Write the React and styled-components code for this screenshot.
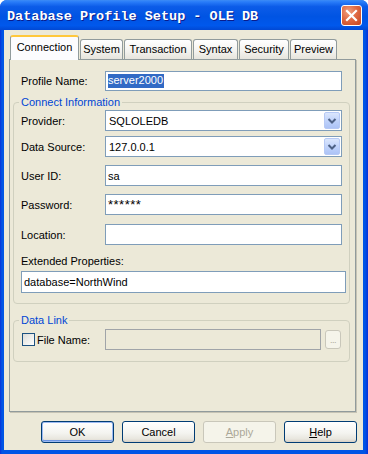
import React from "react";
import styled, {createGlobalStyle} from "styled-components";

const GlobalStyle = createGlobalStyle`
  html, body {
    margin: 0;
    padding: 0;
    width: 368px;
    height: 454px;
    overflow: hidden;
    background: #ffffff;
  }
  * { box-sizing: border-box; }
`;

const Window = styled.div`
  width: 368px;
  height: 454px;
  display: flex;
  flex-direction: column;
  background: linear-gradient(to right, #0831d9 0px, #0055e5 2px, #0055e5 365px, #0831d9 368px);
  border-radius: 7px 7px 0 0;
  font-family: "Liberation Sans", Arial, sans-serif;
  font-size: 11px;
  color: #000;
`;

const TitleBar = styled.div`
  height: 30px;
  flex-shrink: 0;
  display: flex;
  align-items: center;
  justify-content: space-between;
  padding: 0 6px 0 7px;
  border-radius: 7px 7px 0 0;
  background: linear-gradient(to bottom, #3d8cf5 0%, #2a7df9 6%, #0c5ce8 22%, #0054e3 55%, #0058ec 85%, #0148d4 100%);
`;

const Title = styled.span`
  font-family: "Liberation Mono", "Courier New", monospace;
  font-weight: bold;
  font-size: 13.5px;
  color: #ffffff;
  text-shadow: 1px 1px 0 #0a1c8c;
  margin-top: 2px;
`;

const CloseButton = styled.div`
  width: 21px;
  height: 21px;
  border: 1px solid #ffffff;
  border-radius: 3px;
  background: radial-gradient(circle at 35% 30%, #f0a080 0%, #e06a44 45%, #c4441f 100%);
  display: flex;
  align-items: center;
  justify-content: center;
  margin-top: 1px;
`;

const Client = styled.div`
  flex: 1;
  margin: 0 5px 4px 4px;
  background: #ece9d8;
  padding: 5px 0 0 5px;
  display: flex;
  flex-direction: column;
`;

const TabRow = styled.div`
  display: flex;
  align-items: flex-end;
  gap: 1px;
  height: 24px;
  margin-left: 1px;
`;

const Tab = styled.div`
  position: relative;
  width: ${p => p.$w}px;
  height: ${p => (p.$active ? 25 : 20)}px;
  margin-bottom: ${p => (p.$active ? -1 : 0)}px;
  z-index: ${p => (p.$active ? 2 : 0)};
  border: 1px solid #919b9c;
  border-bottom: none;
  border-top: ${p => (p.$active ? "2px solid #ffc83c" : "1px solid #919b9c")};
  border-radius: 3px 3px 0 0;
  background: ${p => (p.$active ? "#fcfcfe" : "linear-gradient(to bottom, #ffffff, #f3f2ee 60%, #e6e4dc)")};
  text-align: center;
  line-height: ${p => (p.$active ? 20 : 19)}px;
  color: #000;
`;

const Panel = styled.div`
  position: relative;
  z-index: 1;
  width: 347px;
  height: 353px;
  border: 1px solid #919b9c;
  box-shadow: 1px 1px 0 #c6c3b4;
  background: #ece9d8;
  padding: 11px 5px 0 3px;
`;

const Row = styled.div`
  display: grid;
  grid-template-columns: 84px ${p => p.$w || 237}px;
  align-items: center;
  margin-top: ${p => p.$mt || 0}px;
  padding-left: ${p => p.$pl || 0}px;
`;

const Label = styled.span`
  white-space: nowrap;
  line-height: 13px;
  padding-top: 1px;
`;

const Field = styled.div`
  height: ${p => p.$h || 21}px;
  border: 1px solid #7f9db9;
  background: #ffffff;
  padding-left: 2px;
  display: flex;
  align-items: center;
  white-space: nowrap;
  margin-right: ${p => p.$mr || 0}px;
  margin-top: ${p => p.$mt || 0}px;
`;

const Masked = styled.span`
  font-size: 13px;
  letter-spacing: 0.5px;
  line-height: 13px;
  align-self: flex-start;
  margin-top: 3px;
`;

const Selected = styled.span`
  background: #316ac5;
  color: #ffffff;
  padding: 0 1px 1px 0;
  line-height: 13px;
`;

const ComboBox = styled(Field)`
  justify-content: space-between;
  padding-right: 1px;
  padding-left: 3px;
`;

const DropButton = styled.div`
  width: 16px;
  height: 17px;
  border: 1px solid #b6c9f5;
  border-radius: 2px;
  background: linear-gradient(to bottom, #dbe6fd, #bcd0fa 60%, #adc3f6);
  display: flex;
  align-items: center;
  justify-content: center;
`;

const Group = styled.fieldset`
  margin: ${p => p.$mt || 0}px 0 0 0;
  padding: 0 7px ${p => p.$pb || 10}px 7px;
  border: 1px solid #d0d0bf;
  border-radius: 4px;
  min-width: 0;
`;

const Legend = styled.legend`
  padding: 0 2px;
  margin-left: -2px;
  color: #0046d5;
  line-height: 13px;
`;

const BlockLabel = styled.div`
  line-height: 13px;
  margin-top: ${p => p.$mt || 0}px;
`;

const FileRow = styled.div`
  display: flex;
  align-items: center;
  margin-top: 2px;
`;

const CheckArea = styled.div`
  width: 84px;
  display: flex;
  align-items: center;
  gap: 2px;
`;

const CheckBox = styled.div`
  width: 13px;
  height: 13px;
  margin-left: 1px;
  border: 1px solid #1c5180;
  background: linear-gradient(135deg, #dcdcd7, #ffffff);
`;

const DisabledField = styled.div`
  width: 216px;
  height: 21px;
  border: 1px solid #a0a4a8;
  background: #ece9d8;
`;

const BrowseButton = styled.div`
  width: 16px;
  height: 19px;
  margin-left: 4px;
  border: 1px solid #c9c7ba;
  border-radius: 3px;
  background: #f5f4ea;
  color: #aca899;
  font-size: 9px;
  line-height: 9px;
  display: flex;
  align-items: flex-end;
  justify-content: center;
  padding-bottom: 3px;
  letter-spacing: -0.5px;
`;

const ButtonRow = styled.div`
  display: flex;
  justify-content: flex-end;
  gap: 8px;
  margin-top: 9px;
  padding-right: 6px;
`;

const Button = styled.div`
  width: 73px;
  height: 22px;
  border: 1px solid ${p => (p.$disabled ? "#c9c7ba" : "#003c74")};
  border-radius: 3px;
  background: ${p => (p.$disabled ? "#f5f4ea" : "linear-gradient(to bottom, #ffffff, #f4f4f0 55%, #e8e6de 85%, #d6d0c5)")};
  box-shadow: ${p => (p.$default ? "inset 0 0 0 1px #9dbaf2, inset 0 -1px 0 1px #6c95e4" : "none")};
  color: ${p => (p.$disabled ? "#aca899" : "#000")};
  display: flex;
  align-items: center;
  justify-content: center;
  line-height: 13px;
`;

const Chevron = () => (
    <svg width="10" height="8" viewBox="0 0 10 8">
        <path d="M1.5 2 L5 5.5 L8.5 2" fill="none" stroke="#4d6185" strokeWidth="2"/>
    </svg>
);

const CloseIcon = () => (
    <svg width="13" height="13" viewBox="0 0 13 13">
        <path d="M2 2 L11 11 M11 2 L2 11" stroke="#ffffff" strokeWidth="2.2" strokeLinecap="square"/>
    </svg>
);

const tabs = [
    {name: 'Connection', w: 69, active: true},
    {name: 'System', w: 43},
    {name: 'Transaction', w: 68},
    {name: 'Syntax', w: 45},
    {name: 'Security', w: 50},
    {name: 'Preview', w: 47},
];

const App = () => {
    return (
        <>
            <GlobalStyle/>
            <Window>
                <TitleBar>
                    <Title>Database Profile Setup - OLE DB</Title>
                    <CloseButton><CloseIcon/></CloseButton>
                </TitleBar>
                <Client>
                    <TabRow>
                        {tabs.map(t => (
                            <Tab key={t.name} $w={t.w} $active={t.active}>{t.name}</Tab>
                        ))}
                    </TabRow>
                    <Panel>
                        <Row $pl={8}>
                            <Label>Profile Name:</Label>
                            <Field $h={20}><Selected>server2000</Selected></Field>
                        </Row>
                        <Group $mt={5}>
                            <Legend>Connect Information</Legend>
                            <Row $mt={1}>
                                <Label>Provider:</Label>
                                <ComboBox>SQLOLEDB<DropButton><Chevron/></DropButton></ComboBox>
                            </Row>
                            <Row $mt={5}>
                                <Label>Data Source:</Label>
                                <ComboBox>127.0.0.1<DropButton><Chevron/></DropButton></ComboBox>
                            </Row>
                            <Row $mt={8}>
                                <Label>User ID:</Label>
                                <Field>sa</Field>
                            </Row>
                            <Row $mt={8}>
                                <Label>Password:</Label>
                                <Field><Masked>******</Masked></Field>
                            </Row>
                            <Row $mt={9}>
                                <Label>Location:</Label>
                                <Field/>
                            </Row>
                            <BlockLabel $mt={10}>Extended Properties:</BlockLabel>
                            <Field $h={22} $mt={3} $mr={-4}>database=NorthWind</Field>
                        </Group>
                        <Group $mt={10} $pb={11}>
                            <Legend>Data Link</Legend>
                            <FileRow>
                                <CheckArea>
                                    <CheckBox/>
                                    <Label>File Name:</Label>
                                </CheckArea>
                                <DisabledField/>
                                <BrowseButton>...</BrowseButton>
                            </FileRow>
                        </Group>
                    </Panel>
                    <ButtonRow>
                        <Button $default>OK</Button>
                        <Button>Cancel</Button>
                        <Button $disabled><u>A</u>pply</Button>
                        <Button><u>H</u>elp</Button>
                    </ButtonRow>
                </Client>
            </Window>
        </>
    );
};

export default App;
